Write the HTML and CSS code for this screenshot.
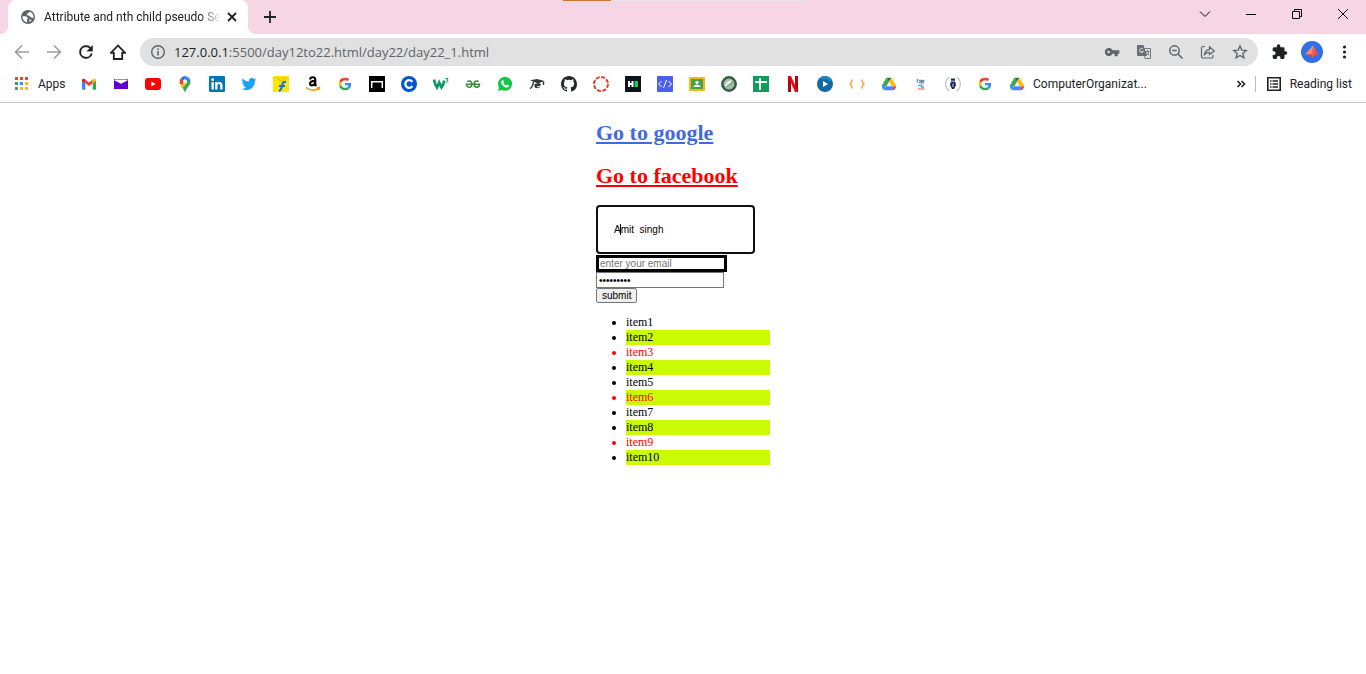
FILE: index.html
```html
<!DOCTYPE html>
<html lang="en">
<head>
<meta charset="utf-8">
<title>Attribute and nth child pseudo Selector</title>
<link rel="stylesheet" href="styles.css">
</head>
<body>
<svg class="defs" aria-hidden="true">
  <symbol id="google" viewBox="0 0 48 48"><path fill="#EA4335" d="M24 9.500c3.540 0 6.710 1.220 9.210 3.600l6.850-6.850C35.900 2.380 30.470 0 24 0 14.620 0 6.510 5.380 2.560 13.220l7.980 6.190C12.430 13.720 17.740 9.500 24 9.500z"/><path fill="#4285F4" d="M46.980 24.550c0-1.570-.15-3.090-.38-4.550H24v9.020h12.940c-.58 2.960-2.260 5.480-4.780 7.180l7.730 6c4.510-4.180 7.090-10.360 7.090-17.650z"/><path fill="#FBBC05" d="M10.530 28.590c-.48-1.450-.76-2.990-.76-4.590s.27-3.140.76-4.590l-7.980-6.190C.92 16.460 0 20.120 0 24c0 3.880.92 7.540 2.560 10.780l7.970-6.190z"/><path fill="#34A853" d="M24 48c6.480 0 11.930-2.130 15.890-5.810l-7.730-6c-2.150 1.450-4.920 2.300-8.160 2.300-6.260 0-11.570-4.220-13.470-9.910l-7.980 6.190C6.510 42.620 14.620 48 24 48z"/></symbol>
  <symbol id="drive" viewBox="0 0 87 78"><path fill="#4285F4" d="M6.600 66.850l3.850 6.650c.8 1.400 1.950 2.500 3.300 3.300l13.750-23.800H0c0 1.550.4 3.100 1.200 4.500z"/><path fill="#34A853" d="M43.650 25L29.900 1.200c-1.350.8-2.500 1.900-3.300 3.300L1.200 48.500A9 9 0 0 0 0 53h27.500z"/><path fill="#EA4335" d="M73.550 76.800c1.350-.8 2.500-1.900 3.300-3.300l1.600-2.750 7.650-13.250c.8-1.400 1.200-2.950 1.200-4.500H59.800l5.850 11.500z"/><path fill="#188038" d="M43.650 25L57.400 1.200C56.050.4 54.500 0 52.900 0H34.400c-1.600 0-3.150.45-4.500 1.200z"/><path fill="#4285F4" d="M59.800 53H27.500L13.750 76.800c1.350.8 2.900 1.200 4.500 1.200h50.800c1.600 0 3.150-.45 4.500-1.200z"/><path fill="#FBBC04" d="M73.400 26.500L60.700 4.500c-.8-1.400-1.950-2.500-3.300-3.300L43.650 25 59.800 53h27.450c0-1.550-.4-3.100-1.200-4.500z"/></symbol>
</svg>

<header class="browser">
  <div class="tabstrip">
    <div class="progress"><span class="progress-done"></span></div>
    <div class="tab">
      <svg class="favicon" viewBox="0 0 24 24"><circle cx="12" cy="12" r="12" fill="#5f6368"/><path fill="#fff" d="M2.500 10.500l6 .3 3.800 3.400-2.300 2.300.8 4.800C6 20.700 2.600 16.700 2.600 12zM14.500 2.800l-1.500 2.400-3 1.300.3 2.500 4.200 1 2.500 3 4.600.5a9.500 9.500 0 0 0-7.100-10.700zM14 16l4.500 1.500-3.500 3z"/></svg>
      <span class="tab-title">Attribute and nth child pseudo Se</span>
      <button class="tab-close" aria-label="Close tab"><svg class="i10" viewBox="0 0 10 10"><path class="thick" d="M1 1l8 8M9 1l-8 8"/></svg></button>
    </div>
    <button class="new-tab" aria-label="New tab"><svg class="i12" viewBox="0 0 12 12"><path class="thick" d="M6 0v12M0 6h12"/></svg></button>
    <div class="window-controls">
      <button aria-label="Search tabs"><svg class="i12" viewBox="0 0 12 12"><path class="thin" d="M1 3.500l5 5 5-5"/></svg></button>
      <button aria-label="Minimize"><svg class="i12" viewBox="0 0 12 12"><path class="thin" d="M1 6.500h10"/></svg></button>
      <button aria-label="Restore"><svg class="i12" viewBox="0 0 12 12"><path class="thin" d="M1.500 3.500h7v7h-7zM3.500 3.500v-2h7v7h-2"/></svg></button>
      <button aria-label="Close"><svg class="i12" viewBox="0 0 12 12"><path class="thin" d="M1 1l10 10M11 1L1 11"/></svg></button>
    </div>
  </div>

  <div class="toolbar">
    <button class="tool" aria-label="Back"><svg class="i16" viewBox="0 0 16 16"><path class="arrow" d="M15 8H2M8 1.500L1.500 8 8 14.500"/></svg></button>
    <button class="tool" aria-label="Forward"><svg class="i16" viewBox="0 0 16 16"><path class="arrow" d="M1 8h13M8 1.500L14.500 8 8 14.500"/></svg></button>
    <button class="tool" aria-label="Reload"><svg class="i20" viewBox="0 0 24 24"><path stroke="#202124" stroke-width=".4" d="M17.650 6.350A7.960 7.960 0 0 0 12 4a8 8 0 1 0 7.730 10h-2.080A6 6 0 1 1 12 6c1.660 0 3.140.69 4.220 1.780L13 11h7V4z"/></svg></button>
    <button class="tool" aria-label="Home"><svg class="i16" viewBox="0 0 16 16"><path fill="none" stroke="#202124" stroke-width="1.800" d="M1 8.800h2.800V15h8.400V8.800H15L8 1.500z"/></svg></button>
    <div class="omnibox">
      <svg class="info" viewBox="0 0 16 16"><circle cx="8" cy="8" r="6.300" fill="none" stroke="#5f6368" stroke-width="1.400"/><path fill="#5f6368" d="M7.200 7h1.600v4.500H7.200zM7.200 4.400h1.600V6H7.200z"/></svg>
      <div class="url" role="textbox" aria-label="Address"><span class="host">127.0.0.1</span>:5500/day12to22.html/day22/day22_1.html</div>
      <button class="tool" aria-label="Passwords"><svg class="i16 gray" viewBox="0 0 24 24"><path d="M12.650 9.500A6 6 0 1 0 12.650 14.500H16v4h4.500v-4H23v-5zM7 14a2 2 0 1 1 0-4 2 2 0 0 1 0 4z"/></svg></button>
      <button class="tool" aria-label="Translate"><svg class="i16" viewBox="0 0 16 16"><path fill="#e1e1e1" stroke="#777a7d" d="M7 4.500h7.500v10H9z"/><path fill="#6b6e72" d="M1 1h6.500l3.500 11H2a1 1 0 0 1-1-1z"/><path fill="none" stroke="#e1e1e1" d="M7 5a2 2 0 1 0 .3 2.500H5.500"/><path fill="none" stroke="#777a7d" d="M9.500 7.500h4M11.500 6v1.500M13 7.500q-.5 2-2.500 3.500M10.500 8.500l2.500 3"/></svg></button>
      <button class="tool" aria-label="Zoom"><svg class="i16" viewBox="0 0 16 16"><circle class="line" cx="6.500" cy="6.500" r="4.700"/><path class="line" d="M10 10l4.500 4.500M4.300 6.500h4.400"/></svg></button>
      <button class="tool" aria-label="Share"><svg class="i16" viewBox="0 0 16 16"><path class="line slim" d="M5 2.500H3a1.500 1.500 0 0 0-1.500 1.500v8.500A1.500 1.500 0 0 0 3 14h8.500a1.500 1.500 0 0 0 1.500-1.500V11M4.500 10.500c.3-3 2-4.500 5-4.800V2.800L14.300 7 9.500 10.500V8.300c-2 0-3.600.6-5 2.200z"/></svg></button>
      <button class="tool" aria-label="Bookmark"><svg class="i16" viewBox="0 0 24 24"><path fill="none" stroke="#5f6368" stroke-width="2" d="M12 3l2.700 6.200 6.700.6-5.100 4.400 1.600 6.600-5.900-3.500-5.900 3.500 1.600-6.600-5.100-4.400 6.700-.6z"/></svg></button>
    </div>
    <button class="tool" aria-label="Extensions"><svg class="i16" viewBox="1 1 23 22"><path d="M20.500 11H19V7a2 2 0 0 0-2-2h-4V3.500a2.500 2.500 0 0 0-5 0V5H4a2 2 0 0 0-2 2v3.800h1.500a2.700 2.700 0 0 1 0 5.400H2V20a2 2 0 0 0 2 2h3.800v-1.500a2.700 2.700 0 0 1 5.400 0V22H17a2 2 0 0 0 2-2v-4h1.500a2.500 2.500 0 0 0 0-5z"/></svg></button>
    <button class="tool" aria-label="Profile"><svg class="i22" viewBox="0 0 22 22"><circle cx="11" cy="11" r="11" fill="#2f6fe8"/><path fill="#ff8a70" d="M12.500 4L4 13.500l7-.5z"/><path fill="#f4624f" d="M12.500 4l2.500 7-3 6-1-4z"/><path fill="#e24f4a" d="M14.500 8l3.500 6.500-4-.5-2 3zM4 13.500l7-.5 1 3.500z"/></svg></button>
    <button class="tool" aria-label="Menu"><svg class="i16" viewBox="0 0 16 16"><circle cx="8.500" cy="3" r="1.600"/><circle cx="8.500" cy="8" r="1.600"/><circle cx="8.500" cy="13" r="1.600"/></svg></button>
  </div>

  <nav class="bookmarks" aria-label="Bookmarks">
    <a class="apps" href="#"><svg class="i16" viewBox="0 0 16 16"><path fill="#ea4335" d="M2 1h3v3H2zM7 1h3v3H7zM12 1h3v3h-3z"/><path fill="#34a853" d="M2 6h3v3H2zM2 11h3v3H2z"/><path fill="#4285f4" d="M7 6h3v3H7z"/><path fill="#fbbc04" d="M12 6h3v3h-3zM7 11h3v3H7zM12 11h3v3h-3z"/></svg>Apps</a>
    <a href="#" aria-label="Gmail"><svg class="i16" viewBox="0 0 16 16"><path fill="#4285f4" d="M1 4.500V13q0 .8.800.8h2.500V7z"/><path fill="#34a853" d="M15 4.500V13q0 .8-.8.8h-2.500V7z"/><path fill="#ea4335" d="M4.300 3.600L8 6.400l3.700-2.800v3.700L8 10.100 4.300 7.300z"/><path fill="#c5221f" d="M1 4.400c0-1.700 1.700-2.200 3.300-.8v3.700L1 4.900z"/><path fill="#fbbc04" d="M15 4.400c0-1.700-1.700-2.200-3.300-.8v3.700L15 4.900z"/></svg></a>
    <a href="#" aria-label="Mail"><svg class="i16" viewBox="0 0 16 16"><path fill="#6001d2" d="M1 3h14v10H1z"/><path fill="#fff" d="M1.500 3.500h13v1L8 7.800 1.500 4.500z"/></svg></a>
    <a href="#" aria-label="YouTube"><svg class="i16" viewBox="0 0 16 16"><rect y="2" width="16" height="12" rx="3" fill="#f00"/><path fill="#fff" d="M6.300 5.400v5.200L10.700 8z"/></svg></a>
    <a href="#" aria-label="Maps"><svg class="i16" viewBox="0 0 16 16"><path fill="#34a853" d="M3.800 9.800C5.400 11.800 6.800 13 7.300 15.200q.7 1.600 1.400 0C9.500 11.500 13.500 10 13.500 5.600L13 3.500z"/><path fill="#fbbc04" d="M3.800 9.800L8 4.500l2 3-4.500 4.800z"/><path fill="#ea4335" d="M4 2L8 5 5 8.500 3 8.200C2.100 6 2.600 3.600 4 2z"/><path fill="#1a73e8" d="M4 2C5.500.2 7.700-.1 9.700.5L6.500 4.500z"/><path fill="#4285f4" d="M9.700.5c1.600.5 2.800 1.600 3.400 3L9.800 7.400 7.600 3z"/><circle cx="8" cy="5.600" r="2" fill="#fff"/></svg></a>
    <a href="#" aria-label="LinkedIn"><svg class="i16" viewBox="0 0 16 16"><rect width="16" height="16" rx="1" fill="#0077b5"/><path fill="#fff" d="M2.500 6h2.300v7.500H2.500zM6.200 6h2.200v1c.9-1.600 5.100-1.800 5.100 2v4.500h-2.300V9.600c0-2.200-2.700-2-2.700 0v3.900H6.200z"/><circle cx="3.650" cy="3.700" r="1.350" fill="#fff"/></svg></a>
    <a href="#" aria-label="Twitter"><svg class="i16" viewBox="-1 -1 26 26"><path fill="#1da1f2" d="M23.950 4.570a10 10 0 0 1-2.820.77 4.960 4.960 0 0 0 2.160-2.720c-.95.550-2 .96-3.130 1.180a4.920 4.920 0 0 0-8.380 4.480C7.690 8.090 4.070 6.130 1.640 3.160a4.920 4.920 0 0 0 1.520 6.570 4.900 4.900 0 0 1-2.230-.61v.06a4.920 4.920 0 0 0 3.950 4.830 5 5 0 0 1-2.210.08 4.940 4.940 0 0 0 4.600 3.420A9.870 9.870 0 0 1 0 19.540a13.990 13.990 0 0 0 7.550 2.210c9.050 0 14-7.500 14-13.980 0-.21 0-.42-.02-.63a9.940 9.940 0 0 0 2.420-2.570z"/></svg></a>
    <a href="#" aria-label="Flipkart"><svg class="i16" viewBox="0 0 16 16"><path fill="#ffe500" d="M0 1l1-1h14l1 1v15H0z"/><path fill="#f8c900" d="M0 1.500h16v1H0z"/><path fill="none" stroke="#e4b700" d="M4 2q4 5 8 0"/><path fill="none" stroke="#1373e6" stroke-width="2.200" d="M13 6c-3-.7-3.300 1-3.800 3.500-.5 3-.8 5-3.200 5.300M6 10h6"/></svg></a>
    <a href="#" aria-label="Amazon"><svg class="i16" viewBox="0 0 16 16"><path fill="none" stroke="#000" stroke-width="2.100" d="M5 3.500c.5-3 5.300-3 5.300.4v4c0 1 .3 1.500 1 2.200M10 4.900c-3.500 0-5 .8-5 2.800 0 2.500 4.700 2.100 5.100-.9"/><path fill="none" stroke="#f90" stroke-width="1.600" d="M1 11.500c4 3.300 9 3.400 12.500 1M11.700 11.700l2.700-.3-.6 2.700"/></svg></a>
    <a href="#" aria-label="Google"><svg class="i16" viewBox="-6 -6 60 60"><use href="#google" width="48" height="48"/></svg></a>
    <a href="#" aria-label="Notes"><svg class="i16" viewBox="0 0 16 16"><path d="M0 0h16v16H0z" fill="#000"/><path fill="none" stroke="#fff" stroke-width="1.500" d="M2.700 12V5.700h10.600V12"/></svg></a>
    <a href="#" aria-label="Coursera"><svg class="i16" viewBox="0 0 16 16"><circle cx="8" cy="8" r="8" fill="#0056d2"/><path fill="none" stroke="#fff" stroke-width="2.300" d="M11.300 5.900a3.800 3.800 0 1 0 0 4.200"/></svg></a>
    <a href="#" aria-label="W3Schools"><svg class="i16" viewBox="0 0 16 16"><path fill="none" stroke="#059862" stroke-width="2.600" d="M1 3.500c.5 3.500 1.300 5.500 3 8l2.200-5 2.300 5c1.500-2 2.300-4 2.700-7"/><path fill="none" stroke="#059862" d="M12.500 2.500H15l-1.300 1.700c2 .1 1.500 2.600-.9 2"/></svg></a>
    <a href="#" aria-label="Practice"><svg class="i16" viewBox="0 0 16 16"><path fill="none" stroke="#388e3c" stroke-width="1.500" d="M2.300 5.600C4.500 4 6.900 5.500 6.900 8c0 4.300-5.400 4-5.400.3h13c0 3.700-5.400 4-5.400-.3 0-2.500 2.400-4 4.600-2.400"/></svg></a>
    <a href="#" aria-label="WhatsApp"><svg class="i16" viewBox="0 0 16 16"><path fill="#12c744" d="M1 15l1-3.600A7 7 0 1 1 4.700 14z"/><path fill="#fff" d="M5.100 4.200l1-.1.900 2-.7 1c.7 1.300 1.500 2 2.700 2.500l1-1 2 1c-.2 2-2 2.300-3.400 1.800C6 10.500 4.300 8 4.200 6.400c0-1 .4-1.700.9-2.200z"/></svg></a>
    <a href="#" aria-label="Courses"><svg class="i16" viewBox="0 0 16 16"><path fill="#323638" d="M1 4.200L8 3l7.500 2L9 7.500zM5.500 8c3-1 6-1 6.300.7.200 1.200-1.500 1.600-4 1.600 0 1.300 2 1.100 3.700.3-1 2-6 2.500-6 0z"/><path fill="none" stroke="#323638" stroke-width="1.400" d="M4.500 5.500C4 9 3 12 .9 12.500M14.500 5.500V9"/></svg></a>
    <a href="#" aria-label="GitHub"><svg class="i16" viewBox="0 0 16 16"><path fill="#24292e" d="M8 0C3.580 0 0 3.580 0 8c0 3.540 2.290 6.530 5.470 7.590.4.070.55-.17.55-.38v-1.490c-2.010.37-2.530-.49-2.690-.94-.09-.23-.48-.94-.82-1.130-.28-.15-.68-.52-.01-.53.63-.01 1.080.58 1.230.82.72 1.210 1.870.87 2.330.66.07-.52.28-.87.51-1.070-1.780-.2-3.640-.89-3.640-3.950 0-.87.31-1.590.82-2.150-.08-.2-.36-1.020.08-2.120 0 0 .67-.21 2.200.82a7.600 7.600 0 0 1 4 0c1.530-1.040 2.200-.82 2.200-.82.440 1.100.160 1.920.080 2.120.510.560.820 1.270.820 2.150 0 3.070-1.870 3.750-3.650 3.950.290.250.540.730.540 1.480v2.200c0 .210.150.460.550.380A8.010 8.010 0 0 0 16 8c0-4.420-3.580-8-8-8z"/></svg></a>
    <a href="#" aria-label="Canvas"><svg class="i16" viewBox="0 0 16 16"><circle cx="8" cy="8" r="7" fill="none" stroke="#e13f2b" stroke-width="2" stroke-dasharray="4 1.500"/></svg></a>
    <a href="#" aria-label="HackerRank"><svg class="i16" viewBox="0 0 16 16"><path fill="#0e141e" d="M0 0h16v16H0z"/><path fill="#fff" d="M3 5h2v2h1.500V5h2v6h-2V9H5v2H3z"/><path fill="#1ecb4f" d="M9.500 5H13v6H9.500z"/></svg></a>
    <a href="#" aria-label="Code"><svg class="i16" viewBox="0 0 16 16"><rect width="16" height="16" rx="1" fill="#4a5eef"/><path fill="none" stroke="#fff" d="M4.500 5L1.500 8l3 3M11.500 5l3 3-3 3M9.500 4l-3 8"/></svg></a>
    <a href="#" aria-label="Classroom"><svg class="i16" viewBox="0 0 16 16"><rect y="1" width="16" height="14" rx="1" fill="#f7b90e"/><path fill="#4a9f4e" d="M2 3h12v10H2z"/><circle cx="8" cy="6.300" r="1.600" fill="#fff"/><path fill="#f0f8f2" d="M4 11q1-2.500 4-2.500t4 2.500z"/></svg></a>
    <a href="#" aria-label="College"><svg class="i16" viewBox="0 0 16 16"><circle cx="8" cy="8" r="6.700" fill="#a9bcab" stroke="#365e42" stroke-width="2.500"/><path fill="#e6ece6" d="M4 10c0-3 3-6 7-5.500-1 1-1 3-3 4.500s-2 2-4 1z"/><path fill="none" stroke="#6a836e" d="M5.500 10.500l6-4"/></svg></a>
    <a href="#" aria-label="Sheets"><svg class="i16" viewBox="0 0 16 16"><path fill="#0f9d58" d="M0 0h16v16H0z"/><path fill="none" stroke="#fff" stroke-width="2" d="M2 6h12M7 2v12"/></svg></a>
    <a href="#" aria-label="Netflix"><svg class="i16" viewBox="0 0 16 16"><path fill="#b1060f" d="M3 0h3v16H3zM10 0h3v16h-3z"/><path fill="#e50914" d="M3 0h3l7 16h-3z"/></svg></a>
    <a href="#" aria-label="Player"><svg class="i16" viewBox="0 0 16 16"><circle cx="8" cy="8" r="8" fill="#1269a3"/><path fill="#1e88bd" d="M3 2a8 8 0 0 1 12 2L8 8z"/><circle cx="8" cy="8" r="5" fill="#1269a3"/><path fill="#fff" d="M6 5v6l5-3z"/></svg></a>
    <a href="#" aria-label="Snippets"><svg class="i16" viewBox="0 0 16 16"><path fill="none" stroke="#f7ac4c" stroke-width="1.600" d="M4 3.700c-2 0-1 3.600-2.800 4.300C3 8.700 2 12.300 4 12.300M12 3.700c2 0 1 3.600 2.800 4.300-1.800.7-.8 4.300-2.800 4.300"/></svg></a>
    <a href="#" aria-label="Drive"><svg class="i16" viewBox="-4 -2 95 82"><use href="#drive" width="87" height="78"/></svg></a>
    <a href="#" aria-label="Learning"><svg class="i16" viewBox="0 0 16 16"><path fill="none" stroke="#6d86a3" stroke-width="1.400" d="M4.500 3v3.500M6 4.500h2.500v2H6M9 4l1 2.500L11 4"/><path fill="none" stroke="#4cace5" stroke-width="1.500" d="M5 9.500h2.500M8.500 8v3h2.500"/><path fill="none" stroke="#f29a9a" stroke-width="1.800" d="M5 13h6.500"/></svg></a>
    <a href="#" aria-label="Writing"><svg class="i16" viewBox="0 0 16 16"><path fill="none" stroke="#b9c9c4" stroke-width="1.300" d="M4.500 1C-.6 4-.6 12 4.500 15M11.500 1c5.100 3 5.100 11 0 14"/><path fill="#17275a" d="M6 2.500h4V5l1 4-2 4H7L5 9l1-4z"/><path fill="none" stroke="#fff" stroke-width=".8" d="M6 5.200h4M8 7.500V11"/></svg></a>
    <a href="#" aria-label="Google search"><svg class="i16" viewBox="-6 -6 60 60"><use href="#google" width="48" height="48"/></svg></a>
    <a class="named" href="#"><svg class="i16" viewBox="-4 -2 95 82"><use href="#drive" width="87" height="78"/></svg>ComputerOrganizat...</a>
    <div class="bookmarks-end">
      <button class="more" aria-label="More bookmarks"><svg class="i10" viewBox="0 0 10 10"><path class="chevrons" d="M1.500 2L4.500 5 1.500 8M5.500 2l3 3-3 3"/></svg></button>
      <button class="reading"><svg class="i16" viewBox="0 0 16 16"><path fill="none" stroke="#202124" stroke-width="1.600" d="M1.800 1.800h12.400v12.400H1.800z"/><path fill="none" stroke="#202124" stroke-width="1.400" d="M4 5h1.500M6.500 5H12M4 8h1.500M6.500 8H12M4 11h1.500M6.500 11H12"/></svg>Reading list</button>
    </div>
  </nav>
</header>

<main class="page">
  <h1 class="heading"><a class="google" href="#">Go to google</a></h1>
  <h1 class="heading"><a class="facebook" href="#">Go to facebook</a></h1>
  <form class="form">
    <div class="name-field"><input class="name" type="text" aria-label="Name" value="Amit  singh"><span class="caret"></span></div>
    <input class="email" type="email" aria-label="Email" placeholder="enter your email">
    <input class="password" type="password" aria-label="Password" value="password1">
    <button class="submit" type="button">submit</button>
  </form>
  <ul class="items">
    <li>item1</li>
    <li>item2</li>
    <li>item3</li>
    <li>item4</li>
    <li>item5</li>
    <li>item6</li>
    <li>item7</li>
    <li>item8</li>
    <li>item9</li>
    <li>item10</li>
  </ul>
</main>
</body>
</html>
```

FILE: styles.css
```css
* { box-sizing: border-box; }
body {
  margin: 0;
  background: #fff;
  color: #000;
  font: 12px/15px "Liberation Serif", "Times New Roman", serif;
}
button { margin: 0; padding: 0; border: 0; background: none; font: inherit; color: inherit; }
svg { display: block; flex: none; fill: #202124; }
.defs { display: none; }
.i10 { width: 10px; height: 10px; }
.i12 { width: 12px; height: 12px; }
.i16 { width: 16px; height: 16px; }
.i20 { width: 20px; height: 20px; }
.i22 { width: 22px; height: 22px; }
.gray { fill: #5f6368; }
.arrow { fill: none; stroke: #9c9c9c; stroke-width: 1.6; }
.thick { fill: none; stroke: #202124; stroke-width: 1.8; }
.thin { fill: none; stroke: #000; stroke-width: 1; }
.line { fill: none; stroke: #5f6368; stroke-width: 1.5; }
.slim { stroke-width: 1.2; }
.chevrons { fill: none; stroke: #202124; stroke-width: 1.6; }

/* Browser frame */
.browser {
  border-bottom: 1px solid #c9c9c9;
  color: #202124;
  font: 12px/16px Roboto, "Open Sans", sans-serif;
}
.tabstrip {
  position: relative;
  display: flex;
  height: 34px;
  padding-left: 8px;
  background: #f6d5e4;
}
.progress {
  position: absolute;
  top: 0;
  left: 563px;
  width: 241px;
  height: 1px;
  background: #e4e4e4;
}
.progress-done { display: block; width: 20%; height: 1px; background: #d2762d; }
.tab {
  position: relative;
  display: flex;
  align-items: center;
  width: 240px;
  padding: 0 11px 0 13px;
  border-radius: 8px 8px 0 0;
  background: #fff;
}
.tab::before, .tab::after {
  content: "";
  position: absolute;
  bottom: 0;
  width: 8px;
  height: 8px;
}
.tab::before { right: 100%; background: radial-gradient(circle at 0 0, transparent 8px, #fff 8px); }
.tab::after { left: 100%; background: radial-gradient(circle at 100% 0, transparent 8px, #fff 8px); }
.favicon { width: 14px; height: 14px; }
.tab-title {
  flex: 1;
  margin: 0 6px 0 9px;
  white-space: nowrap;
  -webkit-mask-image: linear-gradient(to right, #000 88%, transparent);
  mask-image: linear-gradient(to right, #000 88%, transparent);
}
.new-tab { width: 44px; display: grid; place-items: center; }
.window-controls { display: flex; height: 28px; margin-left: auto; }
.window-controls button { width: 46px; display: grid; place-items: center; }

.toolbar { display: flex; align-items: center; height: 36px; padding: 0 6px; }
.tool { flex: none; width: 32px; height: 28px; display: grid; place-items: center; }
.omnibox {
  flex: 1;
  display: flex;
  align-items: center;
  height: 28px;
  margin: 0 6px;
  padding: 0 2px 0 10px;
  border-radius: 14px;
  background: #e1e1e1;
}
.info { width: 16px; height: 16px; }
.url { flex: 1; margin-left: 8px; color: #5f6368; font: 13px/20px "Open Sans", "Noto Sans", sans-serif; white-space: nowrap; }
.host { color: #202124; }

.bookmarks {
  display: flex;
  align-items: center;
  gap: 16px;
  height: 32px;
  padding: 0 14px 4px 13px;
  white-space: nowrap;
}
.bookmarks a { display: flex; align-items: center; color: inherit; text-decoration: none; }
.bookmarks .apps { gap: 9px; width: 52px; }
.bookmarks .named { gap: 8px; }
.bookmarks-end { display: flex; align-items: center; margin-left: auto; }
.more { padding-right: 9px; border-right: 1px solid #bdbdbd; height: 16px; }
.reading { display: flex; align-items: center; gap: 8px; margin-left: 10px; }

/* Page */
.page { width: 174px; margin: 0 auto; padding-top: 16px; }
.heading { margin: 0 0 16px; font-size: 22px; line-height: 27px; white-space: nowrap; }
.google { color: #4169e1; }
.facebook { color: #f00; }
.form { display: flex; flex-direction: column; align-items: flex-start; font: 10px/12px "Liberation Sans", Arial, sans-serif; }
.form input { margin: 0; font: inherit; color: #000; background: #fff; }
.name-field { position: relative; margin-bottom: 1px; }
.form .name {
  display: block;
  width: 159px;
  height: 49px;
  padding: 0 16px;
  border: 2px solid #101010;
  border-radius: 4px;
}
.caret { position: absolute; top: 19px; left: 24px; width: 1px; height: 11px; background: #000; }
.form .email { width: 131px; height: 17px; padding: 0 1px; border: 3px solid #000; }
.email::placeholder { color: #757575; }
.form .password { width: 128px; height: 16px; padding: 0 2px; border: 1px solid #767676; }
.submit { height: 15px; padding: 0 5px; border: 1px solid #767676; border-radius: 2px; background: #efefef; color: #000; }
.items { margin: 12px 0 0; padding-left: 30px; }
.items li:nth-child(2n) { background: #cbfa05; }
.items li:nth-child(3n) { color: #f00; }
```
